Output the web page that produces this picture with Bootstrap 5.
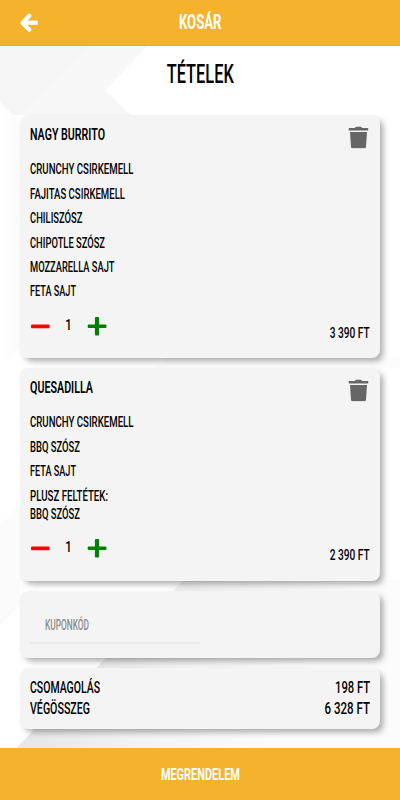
<!DOCTYPE html>
<html lang="hu">
<head>
<meta charset="utf-8">
<meta name="viewport" content="width=device-width, initial-scale=1">
<title>Kosár</title>
<link rel="stylesheet" href="https://cdn.jsdelivr.net/npm/bootstrap@5.3.0/dist/css/bootstrap.min.css">
<style>
  body {
    font-family: Roboto, "Liberation Sans", sans-serif;
    font-weight: 500;
    color: #000;
    height: 800px;
    overflow: hidden;
    background: #fff url("data:image/svg+xml,%3Csvg xmlns='http://www.w3.org/2000/svg' width='400' height='800'%3E%3Cdefs%3E%3ClinearGradient id='a' gradientUnits='userSpaceOnUse' x1='60' y1='660' x2='250' y2='780'%3E%3Cstop offset='0' stop-color='%23e6e6e6'/%3E%3Cstop offset='.5' stop-color='%23f3f3f3'/%3E%3Cstop offset='1' stop-color='%23fcfcfc'/%3E%3C/linearGradient%3E%3ClinearGradient id='b' x1='0' y1='0' x2='1' y2='0'%3E%3Cstop offset='0' stop-color='%23fff'/%3E%3Cstop offset='1' stop-color='%23f9f9f9'/%3E%3C/linearGradient%3E%3C/defs%3E%3Cpath d='M0 102L20 122V348L0 368z' fill='url(%23b)' fill-opacity='.7'/%3E%3Cpath d='M0 46H147L105 90L130 115H13L0 102z' fill='%23f5f5f5'/%3E%3Cpath d='M90 46H147L105 90L130 115H20z' fill='%23f7f7f7'/%3E%3Cpath d='M0 526L20 505V605L0 625z' fill='%23fbfbfb'/%3E%3Cpath d='M166 358L156 368H400V358z' fill='%23fcfcfc'/%3E%3Cpath d='M184 580L16 748H400V580z' fill='url(%23a)'/%3E%3C/svg%3E") no-repeat;
  }
  .bar { background: #f5b22c; color: #fff; }
  .bar-top { height: 46px; border-bottom: 1px solid #f2a91c; }
  .bar-top .side { width: 60px; padding-left: 17px; }
  .bar-bottom { height: 52px; }
  .panel {
    background: #f4f4f4;
    border: 0;
    border-radius: 8px;
    margin: 0 20px 10px;
    padding: 10px;
    box-shadow: 4px 4px 6px -1px rgba(0, 0, 0, .34);
  }
  .panel-burrito { height: 243px; }
  .panel-quesadilla { height: 212.5px; }
  .panel-coupon { height: 67.5px; }
  .panel-sum { height: 61px; margin-bottom: 0; padding-top: 9px; }
  .fit { display: inline-block; white-space: nowrap; transform-origin: 0 50%; }
  .fit-c { transform-origin: 50% 50%; }
  .fit-r { transform-origin: 100% 50%; }
  .t-head { font-size: 20.5px; line-height: 24px; font-weight: 700; padding-bottom: 1.5px; }
  .t-page { font-size: 25.5px; line-height: 30px; padding-top: 12.6px; height: 69px; }
  .t-name { font-size: 16.8px; line-height: 20px; height: 24px; font-weight: 600; margin-top: -1px; }
  .t-item { font-size: 15.4px; line-height: 18.4px; }
  .items { margin: 11.2px 0 0; }
  .items li { height: 18.4px; margin-bottom: 6.05px; }
  .items li.tight { margin-bottom: 0; }
  .ctl { height: 30px; margin-top: 4px; }
  .ctl svg { width: 20px; height: 20px; }
  .qty { width: 37px; height: 20px; }
  .price { padding-top: 14px; }
  .t-sum { font-size: 17px; line-height: 21px; }
  .coupon { width: 170px; height: 43px; padding: 14px 15px 0; border-bottom: 2px solid #e9e9e9; color: #8c8c8c; font-size: 13.8px; line-height: 21px; }
  .t-order { font-size: 17px; line-height: 20px; font-weight: 700; padding-bottom: 1px; }
</style>
<script src="https://cdn.jsdelivr.net/npm/bootstrap@5.3.0/dist/js/bootstrap.bundle.min.js"></script>
</head>
<body class="d-flex flex-column m-0">
<svg width="0" height="0" class="d-none">
  <symbol id="i-trash" viewBox="0 0 20 22"><path fill="#666" d="M.5 1.600h5.800Q7 0 8 0h4q1 0 1.700 1.600h5.800q.5 0 .5.500v1.400q0 .5-.5.500H.5Q0 4 0 3.500V2.100Q0 1.600.5 1.600zM1.500 5.400h17l-1 14.800q-.1 1.500-1.600 1.500H4.100q-1.500 0-1.600-1.500z"/></symbol>
  <symbol id="i-minus" viewBox="0 0 20 20"><rect x="1" y="8.500" width="18.500" height="3.700" rx=".8" fill="#f00"/></symbol>
  <symbol id="i-plus" viewBox="0 0 20 20"><path fill="#008000" d="M8.900 1h2.200q1 0 1 1v6.500h6.400q1 0 1 1v1.600q0 1-1 1h-6.400v6.500q0 1-1 1H8.900q-1 0-1-1v-6.500H1.700q-1 0-1-1V9.500q0-1 1-1h6.200V2q0-1 1-1z"/></symbol>
</svg>

<header class="bar bar-top d-flex align-items-center flex-shrink-0">
  <div class="side d-flex">
    <svg width="24" height="24" viewBox="0 0 24 24" fill="none" stroke="#fff" stroke-width="4.200" stroke-linejoin="round"><path d="M12.300 4.700L5.600 11.700L12.300 18.700" stroke-linecap="round"/><path d="M6.500 11.700H20.800"/></svg>
  </div>
  <div class="flex-grow-1 text-center t-head"><span class="fit fit-c" data-w="42.500">KOSÁR</span></div>
  <div class="side"></div>
</header>

<main class="flex-grow-1">
  <h1 class="t-page text-center m-0"><span class="fit fit-c" data-w="67">TÉTELEK</span></h1>

  <section class="card panel panel-burrito">
    <div class="d-flex justify-content-between">
      <div class="t-name"><span class="fit" data-w="75">NAGY BURRITO</span></div>
      <svg width="23" height="24" viewBox="-1.500 -1.500 23 24"><use href="#i-trash" width="20" height="22"/></svg>
    </div>
    <ul class="list-unstyled items t-item">
      <li><span class="fit" data-w="103.500">CRUNCHY CSIRKEMELL</span></li>
      <li><span class="fit" data-w="95">FAJITAS CSIRKEMELL</span></li>
      <li><span class="fit" data-w="52.500">CHILISZÓSZ</span></li>
      <li><span class="fit" data-w="75">CHIPOTLE SZÓSZ</span></li>
      <li><span class="fit" data-w="84.500">MOZZARELLA SAJT</span></li>
      <li><span class="fit" data-w="46">FETA SAJT</span></li>
    </ul>
    <div class="ctl d-flex align-items-center t-item">
      <svg><use href="#i-minus"/></svg>
      <div class="qty text-center"><span class="fit fit-c" data-w="6.500">1</span></div>
      <svg><use href="#i-plus"/></svg>
      <div class="price ms-auto"><span class="fit fit-r" data-w="40">3 390 FT</span></div>
    </div>
  </section>

  <section class="card panel panel-quesadilla">
    <div class="d-flex justify-content-between">
      <div class="t-name"><span class="fit" data-w="63">QUESADILLA</span></div>
      <svg width="23" height="24" viewBox="-1.500 -1.500 23 24"><use href="#i-trash" width="20" height="22"/></svg>
    </div>
    <ul class="list-unstyled items t-item">
      <li><span class="fit" data-w="103.500">CRUNCHY CSIRKEMELL</span></li>
      <li><span class="fit" data-w="50">BBQ SZÓSZ</span></li>
      <li><span class="fit" data-w="46">FETA SAJT</span></li>
      <li class="tight"><span class="fit" data-w="78">PLUSZ FELTÉTEK:</span></li>
      <li><span class="fit" data-w="50">BBQ SZÓSZ</span></li>
    </ul>
    <div class="ctl d-flex align-items-center t-item">
      <svg><use href="#i-minus"/></svg>
      <div class="qty text-center"><span class="fit fit-c" data-w="6.500">1</span></div>
      <svg><use href="#i-plus"/></svg>
      <div class="price ms-auto"><span class="fit fit-r" data-w="40">2 390 FT</span></div>
    </div>
  </section>

  <section class="card panel panel-coupon">
    <div class="coupon"><span class="fit" data-w="44">KUPONKÓD</span></div>
  </section>

  <section class="card panel panel-sum t-sum">
    <div class="d-flex justify-content-between"><span class="fit" data-w="70">CSOMAGOLÁS</span><span class="fit fit-r" data-w="35">198 FT</span></div>
    <div class="d-flex justify-content-between"><span class="fit" data-w="60">VÉGÖSSZEG</span><span class="fit fit-r" data-w="45.500">6 328 FT</span></div>
  </section>
</main>

<footer class="bar bar-bottom d-flex align-items-center justify-content-center flex-shrink-0 t-order">
  <span class="fit fit-c" data-w="79">MEGRENDELEM</span>
</footer>

<script>
  // Condense every label to its intended width.
  document.querySelectorAll('.fit').forEach(function (el) {
    el.style.transform = 'scaleX(' + (parseFloat(el.dataset.w) / el.getBoundingClientRect().width) + ')';
  });
</script>
</body>
</html>
